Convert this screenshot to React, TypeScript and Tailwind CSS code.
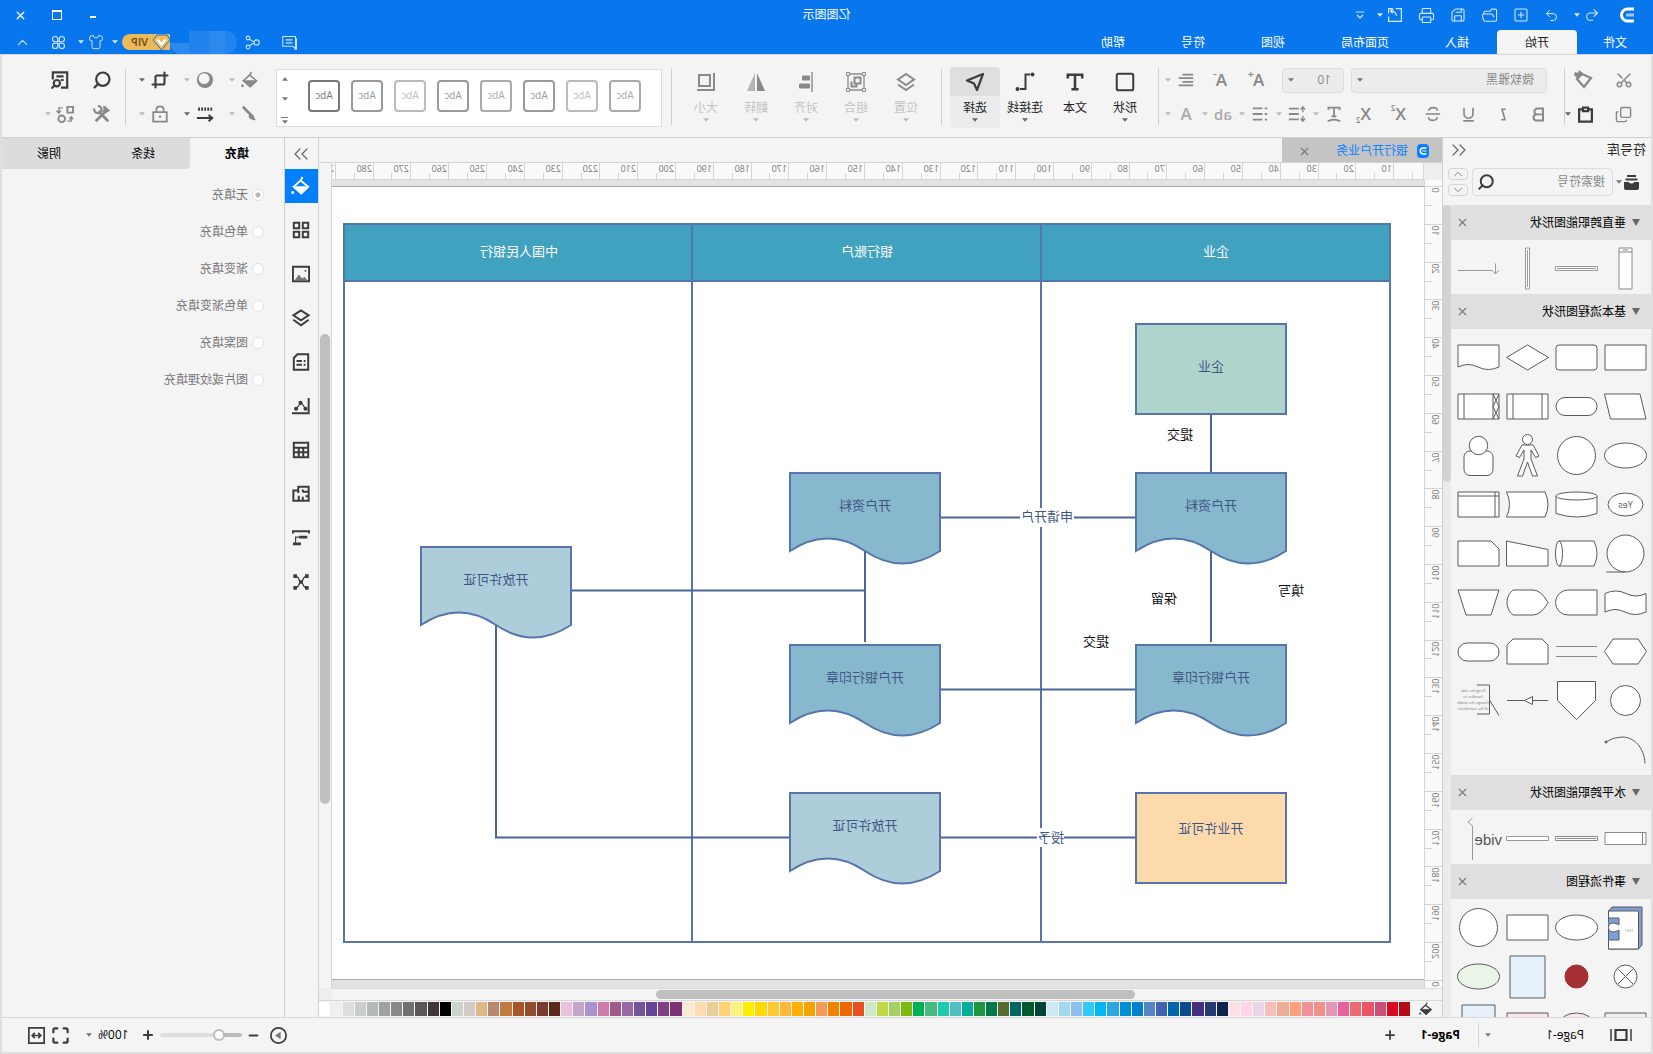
import { ReactNode } from "react";
import {
  ChevronDown,
  ChevronUp,
  ChevronsLeft,
  ChevronsRight,
  Copy,
  Crop,
  FolderOpen,
  Maximize,
  Minus,
  Plus,
  Printer,
  Redo2,
  Save,
  Scissors,
  Search,
  Shirt,
  Square,
  SquarePlus,
  Undo2,
  X,
} from "lucide-react";

const FONT =
  "font-['Open_Sans','Noto_Sans_CJK_SC',sans-serif] text-xs text-[#222]";

const PALETTE = (
  "b50a18 dc0a1e c9507a ea5566 ec6b70 e85f9e e396b6 ef9089 f09199 ff9f7c f0ab93 f8bfba e8d5e8 ffd6e6 ffe0e6 " +
  "0f2350 233b70 432f7a 0a4a90 0068a8 4064b0 5585c5 0080d0 008fd2 2ea7e0 00b7f2 33c8fb 8cc0ee a0d8f0 cde9f6 " +
  "004438 00582c 006563 566d2f 007a48 1e963f 00ae9b 52bdc2 1dcbb0 48bb80 00b056 7fb90f a5d164 bfd944 cde8c8 " +
  "e5501e ec6800 f08300 f39a55 f2a500 ffb000 ffb93a fbca34 ffd900 ffee00 fff380 ffd373 ebcd98 ffdcae fde9d2 " +
  "7a3275 823f85 664298 745399 9968a2 9f5a8a ce7cae ab92cf c6a5c9 ebc0dc 5c281a 7a3b30 954e2a a95527 c27a40 " +
  "b78871 deb887 d3ccc6 c9d5cc 000000 3e3937 595758 717171 898989 9fa0a0 b4b8b6 cbcdcc dcdddd efefef ffffff"
).split(" ");

function Caret({ className = "text-[#777]" }: { className?: string }) {
  return (
    <svg width="6" height="4" viewBox="0 0 7 4" className={`shrink-0 ${className}`}>
      <path d="M0 0h7L3.5 4z" fill="currentColor" />
    </svg>
  );
}

function Ico({ children, size = 20, w = 2 }: { children: ReactNode; size?: number; w?: number }) {
  return (
    <svg
      width={size}
      height={size}
      viewBox="0 0 20 20"
      fill="none"
      stroke="currentColor"
      strokeWidth={w}
      className="shrink-0"
    >
      {children}
    </svg>
  );
}

function Bucket({ size = 20 }: { size?: number }) {
  return (
    <Ico size={size} w={1.8}>
      <path d="M10.500 4.500 2.800 10.800l7 6.700 7.500-6.700z" />
      <path d="M3.500 11.200h13l-6.700 6z" fill="currentColor" />
      <path d="m10.500 5-2-4" />
      <circle cx="18.300" cy="16.500" r="1.500" fill="currentColor" stroke="none" />
    </Ico>
  );
}

function LayersIcon() {
  return (
    <Ico>
      <path d="m10 2 8 5.500-8 5.500-8-5.500z" />
      <path d="m2 12.500 8 5.500 8-5.500" />
    </Ico>
  );
}

function Tool({
  label,
  children,
  caret,
  className = "w-6",
  dark,
}: {
  label: string;
  children: ReactNode;
  caret?: boolean;
  className?: string;
  dark?: boolean;
}) {
  return (
    <button
      aria-label={label}
      className={`flex h-6 shrink-0 items-center ${caret ? "" : "justify-center"} ${
        dark ? "text-[#3c3c3c]" : "text-[#888]"
      } ${className}`}
    >
      <span className="flex w-6 shrink-0 justify-center">{children}</span>
      {caret && <Caret className={dark ? "ml-[3px] text-[#666]" : "ml-[3px] text-[#bbb]"} />}
    </button>
  );
}

function Divider() {
  return <div className="mt-[13px] h-[57px] w-px shrink-0 bg-[#cfcfcf]" />;
}

function Logo({ size = 16 }: { size?: number }) {
  return (
    <svg width={size} height={size} viewBox="0 0 16 16" fill="none" strokeWidth="3">
      <path d="M1 2h6.500a6 6 0 0 1 0 12H1" stroke="currentColor" />
      <path d="M1 8h8" stroke="currentColor" strokeOpacity="0.6" />
    </svg>
  );
}

function TitleBar() {
  return (
    <div className="grid h-[30px] grid-cols-[1fr_auto_1fr] items-center">
      <div className="flex items-center gap-[11px] pl-[18px] text-[#d8eaff]">
        <span className="mr-2 text-white">
          <Logo />
        </span>
        <button aria-label="撤销" className="mr-1 flex items-center gap-1">
          <Undo2 size={16} strokeWidth={1.6} />
          <Caret className="text-[#d8eaff]" />
        </button>
        <button aria-label="恢复" className="mr-1">
          <Redo2 size={15} strokeWidth={1.6} />
        </button>
        <button aria-label="新建" className="mr-1">
          <SquarePlus size={16} strokeWidth={1.6} />
        </button>
        <button aria-label="打开" className="mr-1">
          <FolderOpen size={17} strokeWidth={1.5} />
        </button>
        <button aria-label="保存" className="mr-1">
          <Save size={16} strokeWidth={1.6} />
        </button>
        <button aria-label="打印" className="mr-1">
          <Printer size={17} strokeWidth={1.5} />
        </button>
        <button aria-label="导出" className="flex items-center gap-1">
          <Ico size={16} w={1.5}>
            <path d="M9 2H2v16h16v-6M18 8V2h-5M8 11c1-4 3-6 7-6.500M12 2.500 15.500 4.500 13 8" />
          </Ico>
          <Caret className="text-[#d8eaff]" />
        </button>
        <button aria-label="更多">
          <Ico size={12} w={2}>
            <path d="M3 5h14M5 10l5 5 5-5" />
          </Ico>
        </button>
      </div>
      <h1 className="text-white">亿图图示</h1>
      <div className="flex items-center justify-end gap-5 pr-[13px] text-white">
        <button aria-label="最小化" className="flex w-4 justify-center pt-1">
          <span className="h-0.5 w-[6px] bg-white" />
        </button>
        <button aria-label="最大化" className="flex w-4 justify-center">
          <span className="size-[10px] border border-t-2 border-white" />
        </button>
        <button aria-label="关闭" className="flex w-4 justify-center">
          <X size={13} strokeWidth={2.5} />
        </button>
      </div>
    </div>
  );
}

function MenuBar() {
  const menus = ["插入", "页面布局", "视图", "符号", "帮助"];
  return (
    <nav className="flex h-6 text-white">
      <button className="w-[76px] pt-0.5">文件</button>
      <button className="rounded-t-sm bg-[#f4f4f4] px-7 pt-0.5 text-[#222]">开始</button>
      {menus.map((m) => (
        <button key={m} className="px-7 pt-0.5">
          {m}
        </button>
      ))}
      <div className="ml-auto flex items-center pr-[14px] text-[#cfe4ff]">
        <button aria-label="消息" className="mr-[22px]">
          <Ico size={15} w={1.4}>
            <path d="M2 2h17v13H6l-4 3zM2 5H.700v14h3M6 6.500h9M6 10.500h9" />
          </Ico>
        </button>
        <button aria-label="分享" className="mr-2">
          <Ico size={15} w={1.4}>
            <circle cx="4.500" cy="10" r="3.500" />
            <circle cx="16" cy="4" r="2.500" />
            <circle cx="16" cy="16" r="2.500" />
            <path d="m8 9 2.500-1 3.500-2.500M8 11l2.500 1 3.500 2.500" />
          </Ico>
        </button>
        <div className="flex h-[23px] w-[67px] items-stretch overflow-hidden rounded-full">
          <span className="w-3 bg-white/10" />
          <span className="w-4 bg-white/15" />
          <span className="w-5 bg-white/10" />
          <span className="mt-3 flex-1 bg-white/15" />
        </div>
        <button className="mr-1 flex h-4 w-12 items-center rounded-r-full bg-[#ecb95c] text-[11px] font-semibold text-[#6b4a12]">
          <svg width="19" height="17" viewBox="0 0 19 17" className="-ml-px">
            <path d="M4 1h10l4 5-8.500 10L1 6z" fill="#f3bd58" stroke="#0876ec" />
            <path d="m5.500 5.500 4 5 4-5" fill="none" stroke="#fff" strokeWidth="2.400" />
          </svg>
          <span className="ml-1">VIP</span>
        </button>
        <Caret className="text-[#cfe4ff]" />
        <button aria-label="皮肤" className="ml-2 flex items-center gap-1">
          <Shirt size={16} strokeWidth={1.5} />
          <Caret className="text-[#cfe4ff]" />
        </button>
        <button aria-label="应用" className="ml-3">
          <Ico size={15} w={1.6}>
            <path d="M9 9H5.500A3.500 3.500 0 1 1 9 5.500zM11 9V5.500A3.500 3.500 0 1 1 14.500 9zM9 11v3.500A3.500 3.500 0 1 1 5.500 11zM11 11h3.500a3.500 3.500 0 1 1-3.500 3.500z" />
          </Ico>
        </button>
        <button aria-label="收起" className="ml-5">
          <ChevronUp size={17} strokeWidth={1.6} />
        </button>
      </div>
    </nav>
  );
}

function BigTool({
  label,
  icon,
  caret = true,
  active,
  disabled,
}: {
  label: string;
  icon: ReactNode;
  caret?: boolean;
  active?: boolean;
  disabled?: boolean;
}) {
  return (
    <button
      className={`mt-3 flex h-[61px] w-[50px] shrink-0 flex-col items-center rounded-sm ${
        active ? "bg-[#ececec]" : ""
      } ${disabled ? "text-[#c4c4c4]" : "text-[#222]"}`}
    >
      <span
        className={`flex h-[29px] w-full items-center justify-center rounded-t-sm ${
          active ? "bg-[#dfdfdf]" : ""
        } ${disabled ? "text-[#8a8a8a]" : "text-[#3c3c3c]"}`}
      >
        {icon}
      </span>
      <span className="mt-0.5 leading-5 whitespace-nowrap">{label}</span>
      {caret && <Caret className={disabled ? "text-[#bbb]" : "text-[#666]"} />}
    </button>
  );
}

const letter = "flex text-[17px] leading-6 font-semibold";

function Ribbon() {
  return (
    <div className="flex h-[82px] shrink-0 bg-[#f4f4f4]">
      <div className="flex w-[86px] shrink-0 flex-col gap-[10px] pt-[13px] pl-[15px]">
        <div className="flex gap-4">
          <Tool label="剪切">
            <Scissors size={18} className="-rotate-90" />
          </Tool>
          <Tool label="格式刷">
            <Ico w={2.2}>
              <path d="m3 8 9-4 5 5-7 8z" />
              <path d="m11 3 5 6 4-4-1-3-3 1-1-3z" fill="currentColor" stroke="none" />
            </Ico>
          </Tool>
        </div>
        <div className="flex gap-[14px]">
          <Tool label="复制">
            <Copy size={17} className="-scale-100" />
          </Tool>
          <Tool label="粘贴" caret dark>
            <Ico size={17} w={2.6}>
              <path d="M6 4H2.500v14.500h15V4H14M7 2h6v4H7z" />
            </Ico>
          </Tool>
        </div>
      </div>
      <Divider />
      <div className="flex w-[405px] shrink-0 flex-col gap-[10px] pt-[13px] pl-2">
        <div className="flex h-6 items-center">
          <label className="relative ml-[9px] block h-[25px] w-[196px]">
            <select
              aria-label="字体"
              className="h-full w-full appearance-none rounded-sm border border-[#dcdcdc] bg-[#ececec] pl-3 text-[#888]"
            >
              <option>微软雅黑</option>
            </select>
            <span className="pointer-events-none absolute inset-y-0 right-[6px] flex items-center">
              <Caret />
            </span>
          </label>
          <label className="relative ml-[7px] block h-[25px] w-[62px]">
            <select
              aria-label="字号"
              className="h-full w-full appearance-none rounded-sm border border-[#dcdcdc] bg-[#ececec] pl-3 text-[#888]"
            >
              <option>10</option>
            </select>
            <span className="pointer-events-none absolute inset-y-0 right-[6px] flex items-center">
              <Caret />
            </span>
          </label>
          <Tool label="增大字号" className="ml-2 w-9">
            <span className={letter}>
              A<span className="-ml-px text-[11px] leading-3">+</span>
            </span>
          </Tool>
          <Tool label="减小字号" className="w-9">
            <span className={letter}>
              A<span className="-ml-px text-[11px] leading-3">-</span>
            </span>
          </Tool>
          <Tool label="对齐方式" caret className="ml-1 w-[37px]">
            <Ico size={18}>
              <path d="M2 4h12M2 8h16M2 12h12M2 16h16" />
            </Ico>
          </Tool>
        </div>
        <div className="flex h-6 items-center">
          <Tool label="加粗" className="w-[35px]">
            <Ico size={15} w={2.6}>
              <path d="M4 2h7.500a3.800 3.800 0 0 1 0 7.800H4zM4 9.800h8.500a4.100 4.100 0 0 1 0 8.200H4z" />
            </Ico>
          </Tool>
          <Tool label="斜体" className="w-[35px]">
            <Ico size={15} w={2.2}>
              <path d="M7 3h6M7 17h6M12 3 8 17" />
            </Ico>
          </Tool>
          <Tool label="下划线" className="w-[35px]">
            <Ico size={15} w={2.2}>
              <path d="M4 1v8a6 6 0 0 0 12 0V1M3 18.500h14" />
            </Ico>
          </Tool>
          <Tool label="删除线" className="w-[35px]">
            <Ico size={16} w={2}>
              <path d="M15.500 6C15 3.500 13 2 10 2S4.500 3.500 4.500 6M4.500 14c.5 2.500 2.500 4 5.500 4s5.500-1.500 5.500-4M1 10h18" />
            </Ico>
          </Tool>
          <Tool label="上标" className="w-[35px]">
            <span className={letter}>
              X<span className="text-[8px] leading-3">2</span>
            </span>
          </Tool>
          <Tool label="下标" className="w-[35px]">
            <span className={`${letter} items-end`}>
              X<span className="text-[8px] leading-3">2</span>
            </span>
          </Tool>
          <Tool label="文字效果" caret className="w-[37px]">
            <Ico size={16} w={2.2}>
              <path d="M3 5V2h14v3M10 2v11M7 13h6M2 19q8-4 16 0" />
            </Ico>
          </Tool>
          <Tool label="行距" caret className="w-[37px]">
            <Ico size={18}>
              <path d="M8 4h11M8 10h11M8 16h11" />
              <path d="M3.500 2v6M3.500 12v6M1 5l2.500-3L6 5M1 15l2.500 3L6 15" strokeWidth="1.500" />
            </Ico>
          </Tool>
          <Tool label="项目符号" caret className="w-[37px]">
            <Ico size={16} w={2.2}>
              <path d="M7 3h12M7 10h12M7 17h12M1 3h3M1 10h3M1 17h3" />
            </Ico>
          </Tool>
          <Tool label="高亮" caret className="w-[37px]">
            <span className="text-[15px] leading-6 font-semibold text-[#aaa]">ab</span>
          </Tool>
          <Tool label="字体颜色" caret className="w-[37px]">
            <span className={`${letter} text-[#aaa]`}>A</span>
          </Tool>
        </div>
      </div>
      <Divider />
      <div className="flex px-2">
        <BigTool label="形状" icon={<Square size={22} strokeWidth={2.2} strokeLinejoin="miter" />} />
        <BigTool
          label="文本"
          caret={false}
          icon={
            <Ico size={18} w={2.8}>
              <path d="M2 6V2h16v4M10 2v16M6 18h8" />
            </Ico>
          }
        />
        <BigTool
          label="连接线"
          icon={
            <Ico>
              <circle cx="2.500" cy="2.500" r="2" fill="currentColor" stroke="none" />
              <circle cx="17.500" cy="17" r="2" fill="currentColor" stroke="none" />
              <path d="M5 2.500h4.500V17H15" />
            </Ico>
          }
        />
        <BigTool
          label="选择"
          active
          icon={
            <Ico w={2.2}>
              <path d="m2 2 16 6.500-7 3L8 18z" strokeLinejoin="round" />
            </Ico>
          }
        />
      </div>
      <Divider />
      <div className="flex pr-[9px] pl-[10px]">
        <BigTool label="位置" disabled icon={<LayersIcon />} />
        <BigTool
          label="组合"
          disabled
          icon={
            <Ico w={1.6}>
              <path d="M2 2h16v16H2z" strokeWidth="1.300" />
              <path d="M5.500 5.500h6v6h-6zM14.500 9.500v5H9.500v-3" strokeWidth="2" />
              <path d="M.5.500h3v3h-3zM16.500.500h3v3h-3zM.5 16.500h3v3h-3zM16.500 16.500h3v3h-3z" fill="#f4f4f4" strokeWidth="1" />
            </Ico>
          }
        />
        <BigTool
          label="对齐"
          disabled
          icon={
            <Ico>
              <path d="M4 0v20" strokeWidth="1.400" />
              <path d="M6.500 4h7v4h-7zM6.500 12h10v4h-10z" fill="currentColor" strokeWidth="1" />
            </Ico>
          }
        />
        <BigTool
          label="翻转"
          disabled
          icon={
            <Ico>
              <path d="M9 1v18H1z" fill="currentColor" stroke="none" />
              <path d="M11 1v18h8z" fill="#b5b5b5" stroke="none" />
            </Ico>
          }
        />
        <BigTool
          label="大小"
          disabled
          icon={
            <Ico>
              <path d="M6 3h11v11H6zM2 1v17h17" />
            </Ico>
          }
        />
      </div>
      <Divider />
      <div className="mt-[14px] ml-[9px] flex h-[58px] min-w-0 flex-1 border border-[#dcdcdc] bg-white pt-[10px] pl-5">
        <div className="flex min-w-0 flex-1 gap-[11px] overflow-hidden">
          {["#aaa", "#bbb", "#999", "#aaa", "#999", "#bbb", "#999", "#777"].map((c, i) => (
            <button
              key={i}
              className="size-8 shrink-0 rounded-sm border-2 text-[10px]"
              style={{ borderColor: c, color: c }}
            >
              Abc
            </button>
          ))}
        </div>
        <div className="-mt-[3px] flex w-4 flex-col items-center gap-4 text-[#777]">
          <Caret className="rotate-180" />
          <Caret className="" />
          <span className="flex flex-col items-center gap-0.5">
            <i className="h-px w-[7px] bg-[#777]" />
            <Caret className="" />
          </span>
        </div>
      </div>
      <div className="flex shrink-0 flex-col gap-[10px] pt-[13px] pr-[10px] pl-[14px]">
        <div className="flex gap-[9px]">
          <Tool label="填充" caret className="w-9">
            <Bucket size={18} />
          </Tool>
          <Tool label="阴影" caret className="w-9">
            <Ico size={18} w={1.8}>
              <circle cx="10" cy="10" r="9" fill="currentColor" stroke="none" />
              <circle cx="11" cy="8.500" r="6" fill="#f4f4f4" stroke="none" />
            </Ico>
          </Tool>
          <Tool label="裁剪" caret dark className="w-9">
            <Crop size={18} strokeWidth={2.8} />
          </Tool>
        </div>
        <div className="flex gap-[9px]">
          <Tool label="线条" caret className="w-9">
            <Ico size={18}>
              <path d="m18 2-9 9" strokeWidth="3" />
              <path d="m9 9.500 2.500 2.500c0 4-5 5-8 5 2-2 1.500-6.500 5.500-7.500z" fill="currentColor" stroke="none" />
            </Ico>
          </Tool>
          <Tool label="线型" caret dark className="w-9">
            <Ico size={18} w={2.4}>
              <path d="M2 4.500h16" strokeWidth="3.600" strokeDasharray="2 1.400" />
              <path d="M19 14.500H3M6 11l-4 3.500L6 18" strokeWidth="2.200" />
            </Ico>
          </Tool>
          <Tool label="锁定" caret className="w-9">
            <Ico size={18}>
              <path d="M2.500 8h15v10.500h-15zM6 8V4.500Q6 1.500 10 1.500t4 3V8" />
              <circle cx="10" cy="13" r="1.300" fill="currentColor" stroke="none" />
            </Ico>
          </Tool>
        </div>
      </div>
      <Divider />
      <div className="flex shrink-0 flex-col gap-[10px] pt-[13px] pr-10 pl-[11px]">
        <div className="flex gap-[18px]">
          <Tool label="查找" dark>
            <Search size={20} strokeWidth={2.6} />
          </Tool>
          <Tool label="查找替换" dark>
            <Ico size={18} w={2.4}>
              <path d="M9 18.500H2v-17h16v8M6 6h8M6 10h3" />
              <circle cx="13.500" cy="13.500" r="3.500" />
              <path d="m16 16 3.500 3.500" />
            </Ico>
          </Tool>
        </div>
        <div className="flex gap-3">
          <Tool label="工具">
            <Ico size={18} w={3}>
              <path d="M3 18 14 7M17 18 7 8" />
              <path d="M1 6.500 6.500 1 9.500 2 8 4.500 10 7 6.500 9.500z" fill="currentColor" stroke="none" />
              <path d="M18.500 4A4 4 0 1 1 14.500 1" strokeWidth="2.400" />
            </Ico>
          </Tool>
          <Tool label="替换形状" caret className="w-9">
            <Ico size={19}>
              <path d="M2 2h6v6H2z" />
              <circle cx="14" cy="14.500" r="3.500" />
              <path d="M13 3h4v5M15 6l2 2.500L19.500 6M8 17H4v-4M2 15l2-2.500L6 15" strokeWidth="1.500" />
            </Ico>
          </Tool>
        </div>
      </div>
    </div>
  );
}

type ShapeDef = [string, ReactNode];

const swimlaneV: ShapeDef[] = [
  ["垂直泳道", <path d="M18 4h13v41H18zM18 8h13M22 6h5" stroke="#888" />],
  ["水平条", <path d="M3.500 22.500h42v4h-42zM5 24.500h39" stroke="#999" />],
  ["垂直条", <path d="M22.500 4h4v41h-4zM24.500 6v37" stroke="#999" />],
  ["连线", <path d="M11 26.500h34M7.500 19.500V30M4 26l3.500 4 4-4" fill="none" stroke="#999" />],
];

const basicShapes: ShapeDef[] = [
  ["流程", <path d="M4 12h41v25H4z" />],
  ["圆角流程", <rect x="4" y="12" width="41" height="25" rx="3" />],
  ["判定", <path d="m24.500 12 21 12.500-21 12.500-21-12.500z" />],
  ["文档", <path d="M4 12h41v22q-10-5-20 0T4 34z" />],
  ["数据", <path d="M10 12h35.500l-6 25H4z" />],
  ["起止", <rect x="4" y="15.500" width="41" height="18" rx="9" />],
  ["预定义流程", <path d="M4 12h41v25H4zM10 12v25M39 12v25" />],
  ["外部流程", <path d="M4 12h41v25H4zM10 12v25M39 12v25M4 12l6 12.500L4 37M10 12 4 24.500 10 37" />],
  ["椭圆", <ellipse cx="24.500" cy="24.500" rx="21" ry="12.500" />],
  ["圆", <circle cx="24.500" cy="24.500" r="19" />],
  [
    "人",
    <>
      <circle cx="24.500" cy="8.500" r="5" />
      <path d="M19 14h11l6 11-3.500 1.500L28 19v9l6.500 17h-5l-5-14-5 14h-5L21 28v-9l-4.500 7.500L13 25z" />
    </>,
  ],
  [
    "用户",
    <>
      <rect x="10" y="20" width="29" height="24.500" rx="6" />
      <circle cx="24.500" cy="14.500" r="9.200" />
    </>,
  ],
  [
    "是",
    <>
      <ellipse cx="24.500" cy="24.500" rx="17.500" ry="11.500" />
      <text x="24.500" y="28" textAnchor="middle" fontSize="9" fill="#555" stroke="none">
        Yes
      </text>
    </>,
  ],
  [
    "数据库",
    <>
      <path d="M4 16v17.500q20 7 41 0V16" />
      <ellipse cx="24.500" cy="16" rx="20.500" ry="4" />
    </>,
  ],
  ["存储数据", <path d="M7 12h38.500q-6 12.500 0 25H7Q1 24.500 7 12z" />],
  ["内部存储", <path d="M4 12h41v25H4zM4 16h41M8 12v25" />],
  [
    "顺序数据",
    <>
      <circle cx="24.500" cy="24.500" r="18.500" />
      <path d="M24.500 43h19" />
    </>,
  ],
  [
    "直接数据",
    <>
      <path d="M42 12H7q-6 12.500 0 25h35" />
      <ellipse cx="42" cy="24.500" rx="3.500" ry="12.500" />
    </>,
  ],
  ["手动输入", <path d="M4 20.500 45.500 12v25H4z" />],
  ["卡片", <path d="M12 12h33v25H4V20z" />],
  ["纸带", <path d="M4 15.500q10 5 20 0t21 0V34q-10-5-20 0t-21 0z" />],
  ["延迟", <path d="M4 12h29a12.500 12.500 0 0 1 0 25H4z" />],
  ["显示", <path d="M4 24.500Q11 12 19 12h20q6 5 6 12.500T39 37H19Q11 37 4 24.500z" />],
  ["手动操作", <path d="M4 12h41l-8 25H12z" />],
  ["准备", <path d="M12 12h25l8.500 12.500L37 37H12L3.500 24.500z" />],
  ["并行", <path d="M4 19.500h41M4 29.500h41" stroke="#888" />],
  ["循环界限", <path d="M10 12h29l6 6v19H4V18z" />],
  ["终结", <rect x="4" y="16" width="41" height="18" rx="9" />],
  ["引用", <circle cx="24.500" cy="24.500" r="15" />],
  ["离页引用", <path d="M5.500 5.500h38v19l-19 19-19-19z" />],
  ["箭头", <path d="M4 24.500h15.500m8 0H45M19.500 20.500v8l8-4z" />],
  [
    "批注",
    <>
      <path d="M26 9H13.500v29H26M13.500 24 4 39.500" fill="none" />
      {["Drag the side", "handles to", "change the width", "of the text block."].map((t, i) => (
        <text key={t} x="30" y={16 + i * 6} textAnchor="middle" fontSize="4" fill="#777" stroke="none">
          {t}
        </text>
      ))}
    </>,
  ],
  [
    "弧线",
    <>
      <path d="M5 38.500C6 22 16 12 28 12q9 0 16 5" fill="none" />
      <circle cx="44" cy="17" r="1" fill="#555" />
    </>,
  ],
];

const swimlaneH: ShapeDef[] = [
  ["水平泳道", <path d="M4 18.500h41v12H4zM7.500 18.500v12" stroke="#888" />],
  ["水平条", <path d="M3.500 22.500h42v4h-42zM5 24.500h39" stroke="#888" />],
  ["分隔条", <path d="M3.500 22.500h42v4h-42z" stroke="#999" />],
  [
    "分隔符",
    <>
      <path d="m30.500 4 4.500 4-4.500 4v34" fill="none" stroke="#999" />
      <text x="1" y="31" fontSize="15" fill="#555" stroke="none" className="font-['Liberation_Sans',sans-serif]">
        vide
      </text>
    </>,
  ],
];

const eventShapes: ShapeDef[] = [
  [
    "组件",
    <>
      <path d="M8 4h30l3.500 4v38h-30L8 42z" fill="#7f9fdc" />
      <path d="M31 15l10.500 4v8L31 22zM31 29l6 2 4.500 6H31z" fill="#7f9fdc" stroke="none" />
      <path d="M11.500 8h30v7H31v7c2-1 4-2 6-2 6 0 6 9 0 9-2 0-4-1-6-2v10h10.500v9h-30z" />
      <text x="21" y="29" textAnchor="middle" fontSize="4" fill="#999" stroke="none">
        TEXT
      </text>
    </>,
  ],
  ["事件", <ellipse cx="24.500" cy="24.500" rx="21" ry="12.500" />],
  ["功能", <path d="M4 12h41v25H4z" />],
  ["圆", <circle cx="24.500" cy="24.500" r="19" />],
  [
    "异或",
    <>
      <circle cx="24.500" cy="24.500" r="11.500" />
      <path d="m16.500 16.500 16 16m0-16-16 16" />
    </>,
  ],
  ["终点", <circle cx="24.500" cy="24.500" r="11.500" fill="#a53031" stroke="#a53031" />],
  ["信息", <path d="M7 4h35v42H7z" fill="#e6f0fb" />],
  ["开始事件", <ellipse cx="24.500" cy="24.500" rx="21" ry="12.500" fill="#eaf5e8" />],
  ["组织", <path d="M4 12h41v25H4z" fill="#eaf5e8" />],
  ["结束事件", <ellipse cx="24.500" cy="24.500" rx="18" ry="12.500" fill="#fde6e5" />],
  ["系统", <path d="M4 12h41v25H4z" fill="#fde6e5" />],
  ["目标", <path d="M8 4h33v42H8z" fill="#e6f0fb" />],
];

function Section({ title, shapes }: { title: string; shapes: ShapeDef[] }) {
  return (
    <section>
      <header className="flex h-[35px] items-center bg-[#dfdfdf] pr-[5px] pl-[10px]">
        <svg width="10" height="8" viewBox="0 0 10 8">
          <path d="M1 0h8L5 7z" fill="#666" />
        </svg>
        <h2 className="ml-[5px] flex-1 text-black">{title}</h2>
        <button aria-label="关闭">
          <X size={13} className="text-[#777]" />
        </button>
      </header>
      <div className="grid grid-cols-4 pt-1 pr-[3px] pb-px pl-px">
        {shapes.map(([name, body]) => (
          <button key={name} aria-label={name}>
            <svg width="49" height="49" viewBox="0 0 49 49" fill="#fff" stroke="#5a5a5a">
              {body}
            </svg>
          </button>
        ))}
      </div>
    </section>
  );
}

function Library() {
  return (
    <aside className="flex w-[209px] shrink-0 flex-col border-r border-[#cfcfcf]">
      <div className="flex h-6 items-center justify-between pr-[4px] pl-[5px]">
        <h2 className="text-[13px]">符号库</h2>
        <button aria-label="收起符号库">
          <ChevronsLeft size={24} strokeWidth={1.2} className="text-[#666]" />
        </button>
      </div>
      <div className="mt-[6px] mb-[9px] flex h-7 items-center pl-[12px]">
        <button aria-label="符号库列表" className="flex w-[26px] items-center gap-[2px] text-[#3c3c3c]">
          <svg width="15" height="15" viewBox="0 0 15 15" fill="currentColor">
            <path d="M3 0h9v2H3zM1.500 3.500h12v2h-12zM0 7h4.500q3 3 6 0H15v6q0 2-2 2H2q-2 0-2-2z" />
          </svg>
          <Caret />
        </button>
        <label className="flex h-7 w-[141px] items-center rounded-sm border border-[#dcdcdc]">
          <input
            aria-label="搜索符号"
            placeholder="搜索符号"
            className="min-w-0 flex-1 bg-transparent pl-[7px] outline-none placeholder:text-[#888]"
          />
          <Search size={18} strokeWidth={2.6} className="mr-1 text-[#3c3c3c]" />
        </label>
        <div className="ml-1 flex flex-col gap-1 text-[#777]">
          <button aria-label="上一个" className="flex h-3 w-5 items-center justify-center rounded-sm border border-[#d4d4d4]">
            <ChevronUp size={14} strokeWidth={1.5} />
          </button>
          <button aria-label="下一个" className="flex h-3 w-5 items-center justify-center rounded-sm border border-[#d4d4d4]">
            <ChevronDown size={14} strokeWidth={1.5} />
          </button>
        </div>
      </div>
      <div className="flex min-h-0 flex-1">
        <div className="flex-1 overflow-hidden">
          <Section title="垂直跨职能图形状" shapes={swimlaneV} />
          <Section title="基本流程图形状" shapes={basicShapes} />
          <Section title="水平跨职能图形状" shapes={swimlaneH} />
          <Section title="事件流程图" shapes={eventShapes} />
        </div>
        <div className="w-2 bg-[#ebebeb]">
          <div className="h-[277px] rounded-full bg-[#d3d3d3]" />
        </div>
      </div>
    </aside>
  );
}

// ruler pitch, pixels for every 10 mm
const PITCH = 37.8;

function TopRuler() {
  const marks = Array.from({ length: 30 }, (_, i) => i);
  return (
    <svg className="h-[17px] w-full bg-[#fafafa]" fontSize="9" fill="#777">
      {marks.map((n) => {
        const x = Math.round(n * PITCH - 9) + 0.5;
        const mid = Math.round((n + 0.5) * PITCH - 9) + 0.5;
        return (
          <g key={n}>
            <path d={`M${x} 0v17M${mid} 10v7`} stroke="#d4d4d4" />
            {n > 0 && (
              <text x={x + 1.5} y="9">
                {n * 10}
              </text>
            )}
          </g>
        );
      })}
    </svg>
  );
}

function SideRuler() {
  const marks = Array.from({ length: 22 }, (_, i) => i);
  return (
    <svg className="h-full w-full bg-[#fafafa]" fontSize="9" fill="#777">
      {marks.map((n) => {
        const y = Math.round(n * PITCH + 6) + 0.5;
        const mid = Math.round((n + 0.5) * PITCH + 6) + 0.5;
        return (
          <g key={n}>
            <path d={`M0 ${y}h18M10 ${mid}h8`} stroke="#d4d4d4" />
            <text textAnchor="end" transform={`translate(10 ${y + 1}) rotate(-90)`}>
              {n * 10}
            </text>
          </g>
        );
      })}
    </svg>
  );
}

type NodeDef = { x: number; y: number; text: string; fill: string; doc?: boolean };

const nodes: NodeDef[] = [
  { x: 138, y: 137, text: "企业", fill: "#afd4cc" },
  { x: 138, y: 286, text: "开户资料", fill: "#88b8cd", doc: true },
  { x: 138, y: 458, text: "开户银行印章", fill: "#88b8cd", doc: true },
  { x: 138, y: 606, text: "开业许可证", fill: "#fddaac" },
  { x: 484, y: 286, text: "开户资料", fill: "#88b8cd", doc: true },
  { x: 484, y: 458, text: "开户银行印章", fill: "#88b8cd", doc: true },
  { x: 484, y: 606, text: "开放许可证", fill: "#adcddb", doc: true },
  { x: 853, y: 360, text: "开放许可证", fill: "#adcddb", doc: true },
];

const labels = [
  { x: 244, y: 247, text: "提交" },
  { x: 260, y: 411, text: "保留" },
  { x: 133, y: 403, text: "填写" },
  { x: 328, y: 454, text: "提交" },
];

function Diagram() {
  return (
    <svg width="1092" height="792" viewBox="0 0 1092 792" className="block" fontSize="13">
      <g stroke="#5676ab" strokeWidth="2" fill="none">
        <path d="M34 37h1046v57H34z" fill="#40a2be" />
        <path d="M34 37h1046v718H34zM34 94h1046M383 37v718M732 37v718" />
      </g>
      <g fill="#fff" textAnchor="middle">
        <text x="208" y="69">企业</text>
        <text x="557" y="69">银行账户</text>
        <text x="905" y="69">中国人民银行</text>
      </g>
      <path
        d="M213 227v59M213 364v91M288 330.500h197M288 502.500h197M288 650.500h197M559 364v91M559 403.500h294M928 438v212.500H634"
        fill="none"
        stroke="#4d6595"
        strokeWidth="2"
      />
      {nodes.map((n, i) => (
        <g key={i}>
          <path
            d={n.doc ? `M${n.x} ${n.y}h150v78q-38-25-75 0t-75 0z` : `M${n.x} ${n.y}h150v90h-150z`}
            fill={n.fill}
            stroke="#5676ab"
            strokeWidth="2"
          />
          <text x={n.x + 75} y={n.y + (n.doc ? 37 : n.y > 600 ? 40 : 47)} textAnchor="middle" fill="#3f5685">
            {n.text}
          </text>
        </g>
      ))}
      <path d="M350 321h54v19h-54zM360 641h27v19h-27z" fill="#fff" />
      <g textAnchor="middle" fill="#3f5685">
        <text x="377" y="334">申请开户</text>
        <text x="373" y="655">授予</text>
      </g>
      <g textAnchor="middle" fill="#111">
        {labels.map((l, i) => (
          <text key={i} x={l.x} y={l.y + 5}>
            {l.text}
          </text>
        ))}
      </g>
    </svg>
  );
}

function Editor() {
  return (
    <main className="flex min-w-0 flex-1 flex-col">
      <div className="flex h-[25px] shrink-0 border-b border-[#d4d4d4]">
        <div className="flex w-40 items-center bg-[#c4c4c4] pt-0.5 pr-4 pl-[13px] text-[#0a80ff]">
          <span className="flex h-[14px] w-3 items-center justify-center rounded-sm bg-[#0a80ff] text-white">
            <Logo size={8} />
          </span>
          <span className="ml-[9px] flex-1">银行开户业务</span>
          <button aria-label="关闭标签">
            <X size={13} className="text-[#777]" />
          </button>
        </div>
      </div>
      <div className="grid min-h-0 flex-1 grid-cols-[18px_1fr_13px] grid-rows-[17px_1fr_12px]">
        <div className="bg-[#eee]" />
        <div className="overflow-hidden border-b border-l border-[#d8d8d8]">
          <TopRuler />
        </div>
        <div className="row-span-2 border-l border-[#d4d4d4] pt-[171px]">
          <div className="mx-px h-[470px] rounded-full bg-[#bfbfbf]" />
        </div>
        <div className="overflow-hidden border-r border-[#d4d4d4]">
          <SideRuler />
        </div>
        <div className="flex min-h-0 flex-col bg-[#e3e3e3] pt-[6px] pb-2">
          <div className="min-h-0 flex-1 overflow-hidden border-y border-[#aaa] bg-white">
            <Diagram />
          </div>
        </div>
        <div className="col-span-2 border-t border-[#dcdcdc] pt-px pl-[307px]">
          <div className="h-[9px] w-[479px] rounded-full bg-[#bfbfbf]" />
        </div>
        <div className="bg-[#eee]" />
      </div>
      <div className="flex h-[17px] shrink-0 items-center border-t border-[#d8d8d8]">
        <span className="flex w-8 justify-center text-[#3c3c3c]">
          <Bucket size={14} />
        </span>
        <div className="flex flex-1 gap-px">
          {PALETTE.map((c) => (
            <button key={c} aria-label={`#${c}`} className="h-[14px] flex-1" style={{ background: `#${c}` }} />
          ))}
        </div>
      </div>
    </main>
  );
}

const sideTools: ShapeDef[] = [
  ["符号", <path d="M2 2h6v6H2zM12 2h6v6h-6zM2 12h6v6H2zM12 12h6v6h-6z" />],
  [
    "图片",
    <>
      <path d="M1 2h18v16H1z" />
      <path d="m3 17 3-4 2.500 2 4-4.500L17 17z" fill="#777" stroke="none" />
      <circle cx="5" cy="6.500" r="1" fill="currentColor" stroke="none" />
    </>,
  ],
  ["图层", <path d="m10 1.500 8.500 5.500L10 12.500 1.500 7zM1.500 12l8.500 6 8.500-6" />],
  ["页面", <path d="M2 1.500h12l4 4v13H2zM5 9h2M9 9h6M5 13h2M9 13h6" />],
  [
    "图表",
    <>
      <path d="M1.500 1v17H20" />
      <path d="m5 13 5-7 5 7" strokeWidth="1.300" />
      <circle cx="5" cy="13" r="1.200" fill="currentColor" />
      <circle cx="10.500" cy="6.500" r="1.200" fill="currentColor" />
      <circle cx="15.500" cy="13" r="1.200" fill="currentColor" />
    </>,
  ],
  ["表格", <path d="M2 2h16v16H2zM2 7.500h16M2 12.500h16M7.500 7.500V18M12.500 7.500V18" />],
  ["平面图", <path d="M1.500 2H13v4h5.500v11.500h-17zM1.500 7.500H8M8 5v3M8 13v4.500M1.500 12.500H5M12.500 17.500V12M13 6v3" />],
  [
    "甘特图",
    <>
      <path d="M1 5V2.500h18V5" strokeWidth="2.400" />
      <path d="M3 9h9M10 16.500h9" strokeWidth="3.200" />
      <path d="M11 9h5v7" strokeWidth="1.300" />
    </>,
  ],
  [
    "思维导图",
    <>
      <path d="M3 3.500c6 0 4 6.500 7 6.500s1-6.500 7-6.500M3 16.500c6 0 4-6.500 7-6.500s1 6.500 7 6.500" strokeWidth="1.400" />
      <path d="M1.500 3.500h4M14.500 3.500h4M1.500 16.500h4M14.500 16.500h4M8 10h4" strokeWidth="4" strokeLinejoin="round" />
    </>,
  ],
];

function SideBar() {
  return (
    <div className="flex w-[35px] shrink-0 flex-col items-stretch border-x border-[#cfcfcf] text-[#3c3c3c]">
      <button aria-label="收起面板" className="flex h-[31px] items-center justify-center text-[#666]">
        <ChevronsRight size={24} strokeWidth={1.2} />
      </button>
      <button aria-label="样式" className="mb-[5px] flex h-[34px] items-center justify-center bg-[#0080ff] text-white">
        <Bucket size={20} />
      </button>
      {sideTools.map(([name, body]) => (
        <button key={name} aria-label={name} className="flex h-11 items-center justify-center">
          <Ico size={18} w={2.2}>
            {body}
          </Ico>
        </button>
      ))}
    </div>
  );
}

function Properties() {
  const fills = ["无填充", "单色填充", "渐变填充", "单色渐变填充", "图案填充", "图片或纹理填充"];
  return (
    <aside className="w-[282px] shrink-0">
      <div className="flex h-[31px]">
        <button className="flex-1 font-bold text-black">填充</button>
        <button className="flex-1 rounded-bl bg-[#dcdcdc] text-black">线条</button>
        <button className="flex-1 bg-[#dcdcdc] text-black">阴影</button>
      </div>
      <div className="flex flex-col pt-[7px] pl-5">
        {fills.map((f, i) => (
          <label key={f} className="flex h-[37px] items-center gap-1 text-[#777]">
            <input
              type="radio"
              name="fill"
              defaultChecked={i === 0}
              className="size-3 appearance-none rounded-full border border-[#e0e0e0] bg-white checked:bg-[radial-gradient(circle,#b8b8b8_2px,#fff_3px)]"
            />
            {f}
          </label>
        ))}
      </div>
    </aside>
  );
}

function StatusBar() {
  return (
    <footer className="flex h-[35px] shrink-0 items-center border-t border-[#d8d8d8] pr-[26px] pl-[19px] text-[#3c3c3c]">
      <button aria-label="页面视图">
        <svg width="22" height="14" viewBox="0 0 22 14" fill="none" stroke="currentColor">
          <path d="M5.500 2h11v10h-11z" strokeWidth="2.200" />
          <path d="M1 1v12M21 1v12" strokeWidth="1.500" />
        </svg>
      </button>
      <label className="relative ml-[26px] flex h-6 w-[106px] items-center border-r border-[#d4d4d4]">
        <select aria-label="页面" className="h-full w-full appearance-none bg-transparent text-black">
          <option>Page-1</option>
        </select>
        <span className="pointer-events-none absolute right-[6px]">
          <Caret />
        </span>
      </label>
      <button className="ml-[18px] font-bold text-black">Page-1</button>
      <button aria-label="新增页面" className="ml-6">
        <Plus size={14} strokeWidth={3} />
      </button>
      <div className="ml-auto flex items-center">
        <button aria-label="播放" className="mr-[10px]">
          <Ico size={17} w={2}>
            <circle cx="10" cy="10" r="9" />
            <path d="M7.500 5.500v9L14 10z" fill="#777" stroke="none" />
          </Ico>
        </button>
        <button aria-label="缩小">
          <Minus size={13} strokeWidth={4} />
        </button>
        <input
          type="range"
          aria-label="缩放"
          defaultValue={23}
          className="mx-[5px] h-3 w-[82px] appearance-none bg-transparent [&::-webkit-slider-runnable-track]:h-1 [&::-webkit-slider-runnable-track]:rounded-full [&::-webkit-slider-runnable-track]:bg-[linear-gradient(90deg,#bbb_27%,#dedede_27%)] [&::-webkit-slider-thumb]:-mt-1 [&::-webkit-slider-thumb]:size-3 [&::-webkit-slider-thumb]:appearance-none [&::-webkit-slider-thumb]:rounded-full [&::-webkit-slider-thumb]:border-2 [&::-webkit-slider-thumb]:border-[#bbb] [&::-webkit-slider-thumb]:bg-white"
        />
        <button aria-label="放大">
          <Plus size={14} strokeWidth={3.5} />
        </button>
        <button className="ml-3 flex items-center gap-[6px] text-black">
          100%
          <Caret />
        </button>
        <button aria-label="全屏" className="ml-4">
          <Maximize size={19} strokeWidth={2.8} />
        </button>
        <button aria-label="适应宽度" className="ml-[6px]">
          <Ico size={17} w={2}>
            <path d="M1 1h18v18H1z" />
            <path d="M5 10h10M8 7l-3 3 3 3M12 7l3 3-3 3" />
          </Ico>
        </button>
      </div>
    </footer>
  );
}

export default function App() {
  return (
    <div className={`flex h-screen -scale-x-100 flex-col overflow-hidden bg-[#f4f4f4] ${FONT}`}>
      <header className="shrink-0 bg-[#0876ec]">
        <TitleBar />
        <MenuBar />
      </header>
      <div className="flex min-h-0 flex-1 flex-col border-x-2 border-t border-b-2 border-x-[#dfdfdf] border-t-[#d8d8d8] border-b-[#dfdfdf]">
        <Ribbon />
        <div className="flex min-h-0 flex-1 border-t border-[#cfcfcf]">
          <Library />
          <Editor />
          <SideBar />
          <Properties />
        </div>
        <StatusBar />
      </div>
    </div>
  );
}
